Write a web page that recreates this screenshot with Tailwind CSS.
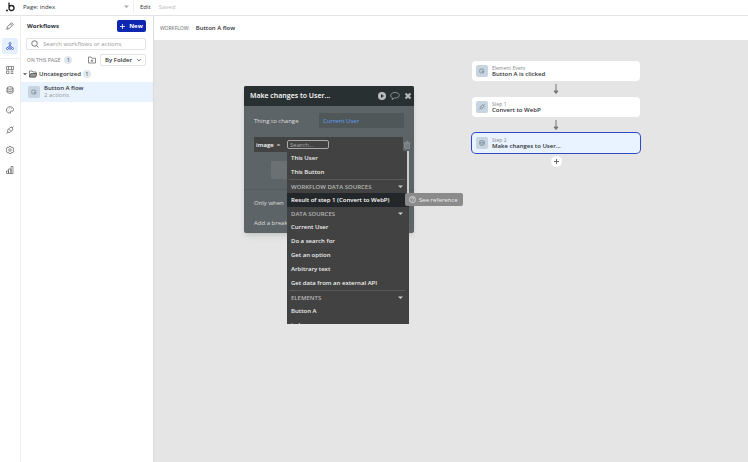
<!DOCTYPE html>
<html lang="en">
<head>
    <meta charset="UTF-8">
    <meta name="viewport" content="width=device-width, initial-scale=1.0">
    <title>Workflow editor</title>
    <script src="https://cdn.jsdelivr.net/npm/@tailwindcss/browser@4"></script>
</head>
<body class="font-['Open_Sans',sans-serif] text-[6px] leading-[10px] text-[#303238] bg-white h-screen flex flex-col overflow-hidden">
    <!-- Shared icons -->
    <svg class="hidden">
        <symbol id="click" viewBox="0 0 16 16"><path d="M7 13H4a2 2 0 0 1-2-2V5a2 2 0 0 1 2-2h7a2 2 0 0 1 2 2v2M8 8l6 2-3 1.500-1 3z"/></symbol>
        <symbol id="plug" viewBox="0 0 16 16"><path d="M1 15l3.500-3.500M5 6l5 5-1.500 1.500c-2 1.500-4 .5-5-1s-1-3 0-4zM5 6l2-2c2-2 4-1.500 5-.5s1.500 3 0 5l-2 2M12 4l3-3M9 2.500l1-1M13.500 7l1-1"/></symbol>
        <symbol id="data" viewBox="0 0 16 16"><ellipse cx="8" cy="4" rx="6" ry="2.500"/><path d="M2 4v8c0 3.300 12 3.300 12 0V4M2 8.500c0 3 12 3 12 0"/></symbol>
        <symbol id="down" viewBox="0 0 10 10"><path d="M2 3.500l3 3 3-3"/></symbol>
        <symbol id="caret" viewBox="0 0 10 10"><path d="M0 3h10L5 8z"/></symbol>
        <symbol id="arrow" viewBox="0 0 8 12"><path d="M4 1v9M2 8l2 2.500L6 8z"/></symbol>
    </svg>

    <header class="h-4 shrink-0 flex items-center pb-[2px] border-b border-[#e4e4e4]">
        <a href="#" aria-label="Home" class="w-5 flex justify-center">
            <svg class="w-[9px] h-[10px]" viewBox="0 0 18 20" fill="none" stroke="#222" stroke-width="2.600"><path d="M6 1v11a5 5 0 1 0 5-5c-3 0-5 2-5 5"/><circle cx="2" cy="17" r="2" fill="#222" stroke="none"/></svg>
        </a>
        <div class="relative w-[114px] h-full pl-[3px] border-r border-[#eee] flex items-center">
            <select aria-label="Page" class="appearance-none w-full outline-none"><option>Page: index</option></select>
            <svg class="absolute right-1 w-[5px] h-[5px] pointer-events-none" fill="#aaa"><use href="#caret"/></svg>
        </div>
        <button class="ml-[6px]">Edit</button>
        <span class="ml-2 text-[#bbb]">Saved</span>
    </header>

    <div class="flex flex-1 min-h-0">
        <nav class="w-[21px] shrink-0 border-r border-[#eee] flex flex-col items-center pt-[2px] text-[#555]">
            <button aria-label="Design" class="w-4 h-4 grid place-items-center"><svg class="w-2 h-2" viewBox="0 0 16 16" fill="none" stroke="currentColor" stroke-width="1.500"><path d="M1.500 14.500l1.500-5L11 1.500l3.500 3.500-8 8zM9 4l3 3"/></svg></button>
            <button aria-label="Workflow" class="mt-1 w-4 h-4 rounded-xs bg-[#e5f0ff] text-[#3b50c8] grid place-items-center"><svg class="w-2 h-2" viewBox="0 0 16 16" fill="none" stroke="currentColor" stroke-width="1.500"><circle cx="8" cy="3" r="2"/><circle cx="3" cy="13" r="2"/><circle cx="8" cy="13" r="1.800"/><circle cx="13" cy="13" r="2"/><path d="M8 5v6M8 7L3 11M8 7l5 4"/></svg></button>
            <hr class="mt-1 w-full border-[#eee]">
            <button aria-label="Elements" class="mt-[3px] w-4 h-4 grid place-items-center"><svg class="w-2 h-2" viewBox="0 0 16 16" fill="none" stroke="currentColor" stroke-width="1.300"><path d="M1 1h14v6H1zM5 1v6M11 1v6M1 10h5v5H1zM9 10h6M9 15h6M12 10v5"/></svg></button>
            <button aria-label="Data" class="mt-1 w-4 h-4 grid place-items-center"><svg class="w-2 h-2" fill="none" stroke="currentColor" stroke-width="1.500"><use href="#data"/></svg></button>
            <button aria-label="Styles" class="mt-1 w-4 h-4 grid place-items-center"><svg class="w-2 h-2" viewBox="0 0 16 16" fill="none" stroke="currentColor" stroke-width="1.500"><path d="M9 14C4 15 1 12 1 8s3-6.500 7-6.500S15 4 15 7c0 2-1 3-3 3-3 0-4 0-3 4z"/><path d="M4 8h1M6 5h1M10 5h1"/></svg></button>
            <button aria-label="Plugins" class="mt-1 w-4 h-4 grid place-items-center"><svg class="w-2 h-2" fill="none" stroke="currentColor" stroke-width="1.500"><use href="#plug"/></svg></button>
            <button aria-label="Settings" class="mt-1 w-4 h-4 grid place-items-center"><svg class="w-2 h-2" viewBox="0 0 16 16" fill="none" stroke="currentColor" stroke-width="1.300"><path d="M6 1h4l1 2.500 3-.5 1.500 3-1.500 2 1.500 2-1.500 3-3-.5-1 2.500H6l-1-2.500-3 .5-1.500-3L2 8 .5 6 2 3l3 .5z"/><circle cx="8" cy="8" r="2.500"/></svg></button>
            <button aria-label="Logs" class="mt-1 w-4 h-4 grid place-items-center"><svg class="w-2 h-2" viewBox="0 0 16 16" fill="none" stroke="currentColor" stroke-width="1.300"><path d="M1 10h4v5H1zM5 6h5v9H5zM10 1h4v14h-4z"/></svg></button>
        </nav>

        <aside class="w-[133px] shrink-0 border-r border-[#ddd]">
            <div class="flex items-center justify-between pl-[6px] pr-[7px] pt-1">
                <h1 class="font-bold">Workflows</h1>
                <button class="h-3 w-[29px] rounded-xs bg-[#0e27b0] text-white font-bold flex items-center justify-center gap-1">
                    <svg class="w-[5px] h-[5px]" viewBox="0 0 10 10" stroke="currentColor" stroke-width="1.600"><path d="M5 0v10M0 5h10"/></svg>New
                </button>
            </div>
            <label class="mt-[6px] ml-[5px] mr-[7px] h-3 flex items-center gap-1 pl-1 border border-[#e4e4e4] rounded-xs">
                <svg class="w-2 h-2 shrink-0" viewBox="0 0 16 16" fill="none" stroke="#555" stroke-width="1.600"><circle cx="7" cy="7" r="5.500"/><path d="M11 11l4 4"/></svg>
                <input type="text" aria-label="Search workflows" placeholder="Search workflows or actions" class="w-full min-w-0 outline-none placeholder:text-[#999]">
            </label>
            <div class="mt-1 ml-[6px] mr-[7px] h-3 flex items-center">
                <span class="text-[5px] text-[#777]">ON THIS PAGE</span>
                <span class="ml-1 w-2 h-2 rounded-full bg-[#dfe7ef] text-[5px] leading-2 text-center">1</span>
                <button aria-label="New folder" class="ml-auto mr-1"><svg class="w-2 h-2" viewBox="0 0 16 16" fill="none" stroke="#666" stroke-width="1.500"><path d="M1 14V2h5l2 2.500h7V14zM8 7v5M5.500 9.500h5"/></svg></button>
                <div class="relative w-[46px] h-3 border border-[#e4e4e4] rounded-xs flex items-center">
                    <select aria-label="Group by" class="appearance-none w-full pl-1 font-semibold outline-none"><option>By Folder</option></select>
                    <svg class="absolute right-[3px] w-[6px] h-[6px] pointer-events-none" fill="none" stroke="#555" stroke-width="1.400"><use href="#down"/></svg>
                </div>
            </div>
            <div class="mt-[3px] h-[10px] flex items-center pl-[2px]">
                <svg class="w-1 h-1" fill="#555"><use href="#caret"/></svg>
                <svg class="ml-[2px] w-2 h-2" viewBox="0 0 16 16" fill="none" stroke="#555" stroke-width="1.400"><path d="M1 14V2h5l2 2h6v3M1 14L4 7h12l-3 7z"/><path d="M4 7h12l-3 7H1z" fill="#999"/></svg>
                <span class="ml-[2px] font-semibold">Uncategorized</span>
                <span class="ml-[2px] w-2 h-2 rounded-full bg-[#dfe7ef] text-[5px] leading-2 text-center">1</span>
            </div>
            <a href="#" class="mt-[3px] h-5 flex items-center pl-[7px] gap-1 bg-[#e9f2ff]">
                <span class="w-3 h-3 rounded-xs bg-[#c7d5e1] grid place-items-center"><svg class="w-[6px] h-[6px]" fill="none" stroke="#667788" stroke-width="1.600"><use href="#click"/></svg></span>
                <span class="leading-[7px]"><b class="block font-semibold">Button A flow</b><span class="block text-[#999]">2 actions</span></span>
            </a>
        </aside>

        <main class="flex-1 min-w-0 flex flex-col">
            <div class="h-6 shrink-0 flex items-center pl-[6px] gap-[6px]">
                <span class="text-[5px] text-[#666]">WORKFLOW:</span>
                <span class="font-semibold">Button A flow</span>
            </div>

            <div class="relative flex-1 bg-[#e5e5e5]">
                <!-- Workflow steps on the canvas -->
                <div class="absolute left-[318px] top-[21px] w-[168px] flex flex-col items-center">
                    <div class="w-full h-5 rounded-sm bg-white flex items-center pl-1 gap-1">
                        <span class="w-3 h-3 rounded-xs bg-[#c7d5e1] grid place-items-center"><svg class="w-[6px] h-[6px]" fill="none" stroke="#667788" stroke-width="1.600"><use href="#click"/></svg></span>
                        <span class="leading-[6px]"><span class="block text-[5px] text-[#888]">Element Event</span><b class="block font-semibold">Button A is clicked</b></span>
                    </div>
                    <svg class="my-[2px] w-2 h-3" fill="#777" stroke="#777"><use href="#arrow"/></svg>
                    <div class="w-full h-5 rounded-sm bg-white flex items-center pl-1 gap-1">
                        <span class="w-3 h-3 rounded-xs bg-[#c7d5e1] grid place-items-center"><svg class="w-[6px] h-[6px]" fill="none" stroke="#667788" stroke-width="1.600"><use href="#plug"/></svg></span>
                        <span class="leading-[6px]"><span class="block text-[5px] text-[#888]">Step 1</span><b class="block font-semibold">Convert to WebP</b></span>
                    </div>
                    <svg class="my-[2px] w-2 h-3" fill="#777" stroke="#777"><use href="#arrow"/></svg>
                    <div class="w-full h-5 rounded-sm bg-[#e9f2ff] ring-1 ring-[#3049c9] flex items-center pl-1 gap-1">
                        <span class="w-3 h-3 rounded-xs bg-[#c7d5e1] grid place-items-center"><svg class="w-[6px] h-[6px]" fill="none" stroke="#667788" stroke-width="1.600"><use href="#data"/></svg></span>
                        <span class="leading-[6px]"><span class="block text-[5px] text-[#888]">Step 2</span><b class="block font-semibold">Make changes to User...</b></span>
                    </div>
                    <button aria-label="Add step" class="mt-[3px] w-[11px] h-[11px] rounded-full bg-white grid place-items-center"><svg class="w-[5px] h-[5px]" viewBox="0 0 10 10" stroke="#666" stroke-width="2"><path d="M5 0v10M0 5h10"/></svg></button>
                </div>

                <!-- Property editor -->
                <section class="absolute left-[90px] top-[46px] w-[170px] h-[147px] rounded-xs bg-[#5d6467] text-[#ddd] shadow-md">
                    <div class="h-5 flex items-center gap-1 pl-[6px] pr-[2px] rounded-t-xs bg-[#293031]">
                        <h2 class="flex-1 text-[7px] font-semibold text-white">Make changes to User...</h2>
                        <button aria-label="Run"><svg class="w-2 h-2" viewBox="0 0 16 16"><circle cx="8" cy="8" r="8" fill="#b8bcbd"/><path d="M6 4l6 4-6 4z" fill="#293031"/></svg></button>
                        <button aria-label="Comment"><svg class="w-[10px] h-2" viewBox="0 0 20 16" fill="none" stroke="#aaa" stroke-width="1.600"><path d="M5 12C-2 8 2 1 10 1s12 7 5 10c-3 1.500-6 1-6 1l-5 3z"/></svg></button>
                        <button aria-label="Close"><svg class="w-2 h-2" viewBox="0 0 16 16" stroke="#b8bcbd" stroke-width="4"><path d="M3 3l10 10M13 3L3 13"/></svg></button>
                    </div>
                    <div class="mt-[7px] mx-[10px] flex items-center">
                        <span class="w-[65px]">Thing to change</span>
                        <button class="flex-1 h-[15px] pl-1 text-left bg-[#505759] text-[#5e9ff2]">Current User</button>
                    </div>
                    <div class="mt-[9px] ml-[10px] flex items-center">
                        <label for="field-value" class="w-[149px] h-[15px] flex items-center pl-[2px] bg-[#424242]">
                            <span class="w-[31px]"><b class="font-semibold text-white">image</b>&nbsp; =</span>
                            <input id="field-value" type="text" placeholder="Search..." class="w-[42px] h-[9px] px-[2px] border border-[#aaa] rounded-xs outline-none placeholder:text-[#aaa]">
                        </label>
                        <button aria-label="Delete field"><svg class="w-2 h-2" viewBox="0 0 16 16" fill="#777c7e" stroke="#898e90" stroke-width="1.500"><path d="M3 4h10v11H3zM1 4h14M6 1h4v3"/></svg></button>
                    </div>
                    <button aria-label="Set another field" class="mt-[9px] ml-[27px] block w-[115px] h-[18px] bg-[#6b7173]"></button>
                    <hr class="mt-[10px] border-[#555c5f]">
                    <p class="mt-2 ml-[10px]">Only when</p>
                    <p class="mt-[10px] ml-[10px]">Add a break</p>
                </section>

                <!-- Data source menu -->
                <div class="absolute left-[133px] top-[111px] w-[122px] h-[173px] bg-[#424242] text-[#eee] font-semibold overflow-hidden">
                    <ul class="leading-[14px] whitespace-nowrap">
                        <li class="px-1">This User</li>
                        <li class="px-1">This Button</li>
                        <li class="ml-[2px] mr-1 px-[2px] h-[14px] border-t border-[#595959] text-[#b8b8b8] flex justify-between items-center leading-3">WORKFLOW DATA SOURCES<svg class="w-[5px] h-[5px]" fill="#ccc"><use href="#caret"/></svg></li>
                        <li class="px-1 bg-[#242729] text-white">Result of step 1 (Convert to WebP)</li>
                        <li class="mr-1 pl-1 pr-[2px] h-[13px] text-[#b8b8b8] flex justify-between items-center leading-3">DATA SOURCES<svg class="w-[5px] h-[5px]" fill="#ccc"><use href="#caret"/></svg></li>
                        <li class="px-1">Current User</li>
                        <li class="px-1">Do a search for</li>
                        <li class="px-1">Get an option</li>
                        <li class="px-1">Arbitrary text</li>
                        <li class="px-1">Get data from an external API</li>
                        <li class="ml-[2px] mr-1 px-[2px] h-[14px] border-t border-[#595959] text-[#b8b8b8] flex justify-between items-center leading-3">ELEMENTS<svg class="w-[5px] h-[5px]" fill="#ccc"><use href="#caret"/></svg></li>
                        <li class="px-1">Button A</li>
                        <li class="px-1">index</li>
                    </ul>
                    <span class="absolute right-0 top-0 w-[2px] h-[42px] bg-[#ccc]"></span>
                </div>
                <button class="absolute left-[251px] top-[153px] w-[58px] h-[13px] rounded-xs bg-[#8b8b8b] text-[#eee] flex items-center pl-1 gap-[3px] whitespace-nowrap">
                    <svg class="w-[7px] h-[7px]" viewBox="0 0 16 16" fill="none" stroke="currentColor" stroke-width="1.500"><circle cx="8" cy="8" r="7"/><path d="M5.500 6c0-3 5-3 5 0 0 2-2.500 1.500-2.500 4M8 11v1.500"/></svg>See reference
                </button>
            </div>
        </main>
    </div>
</body>
</html>
